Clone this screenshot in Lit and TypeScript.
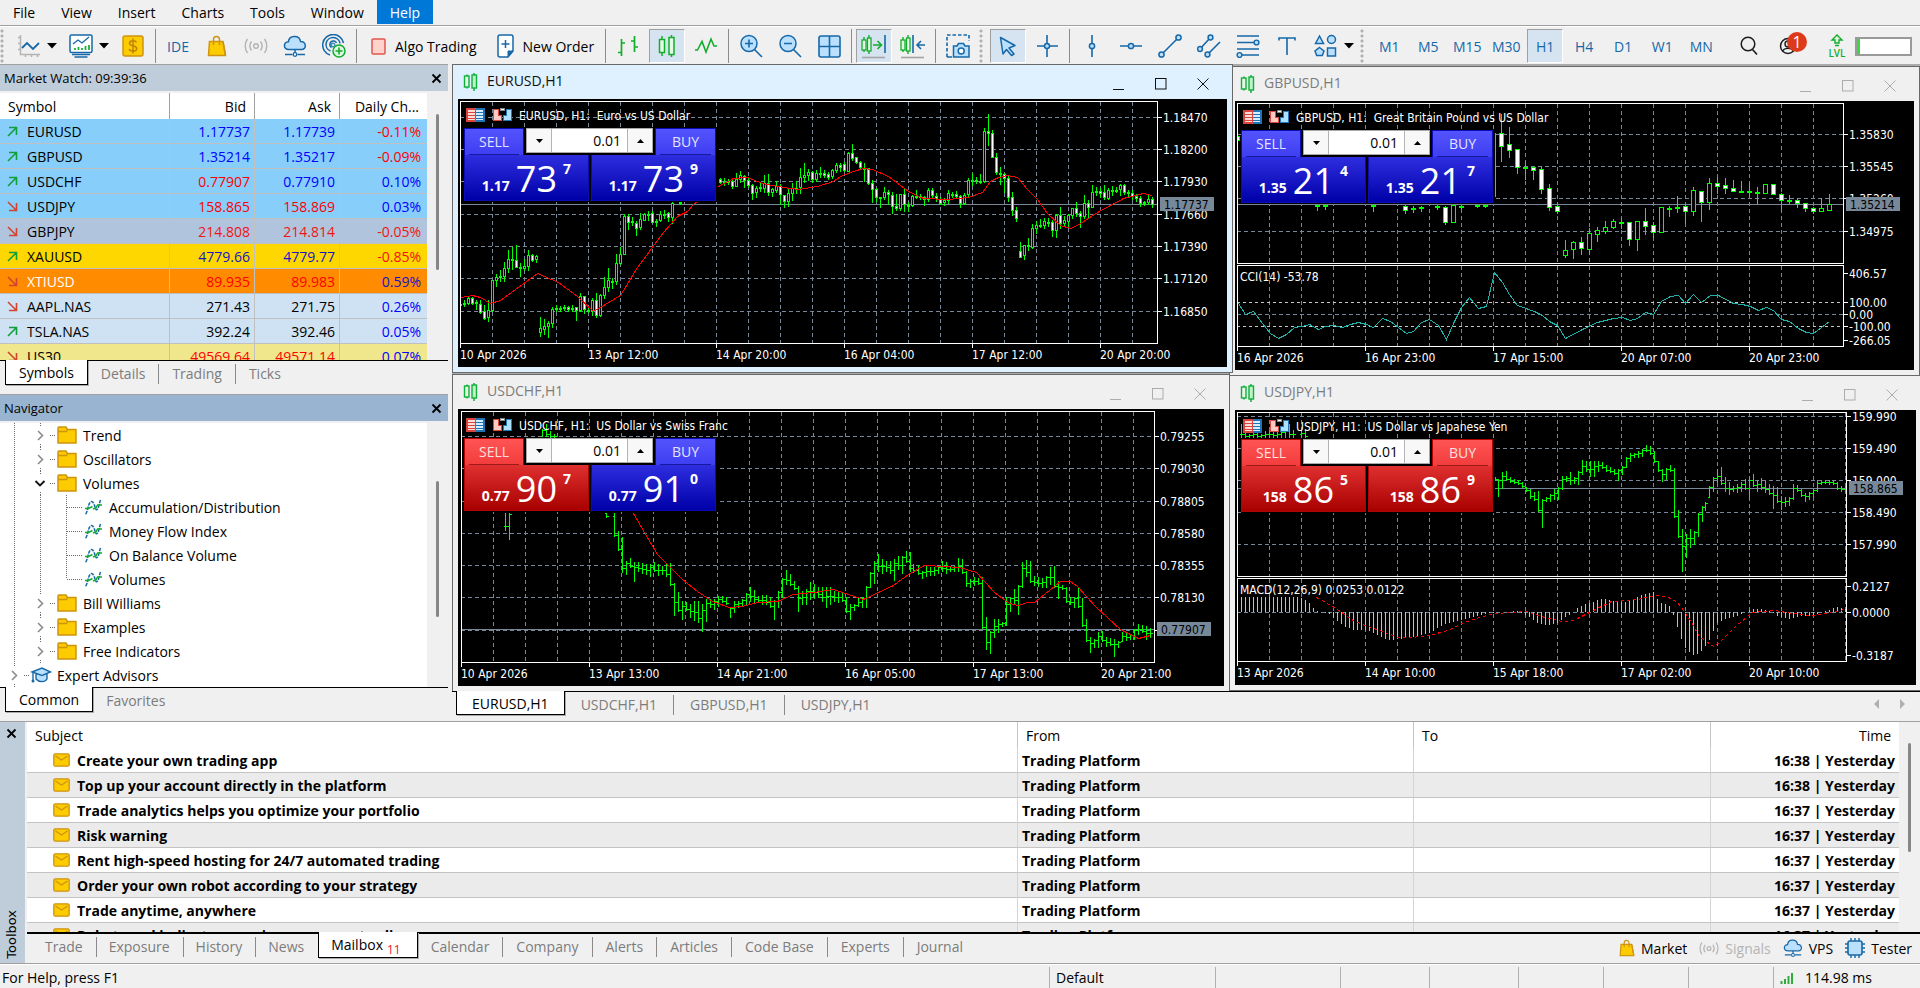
import { LitElement, html, css, svg, nothing } from "lit";
import { customElement, property } from "lit/decorators.js";
import { classMap } from "lit/directives/class-map.js";
import { styleMap } from "lit/directives/style-map.js";

type Pt = [number, number];
interface ScreenScale { x: number; kx: number; y: number; }

/* ---------- chart data ---------- */

const trace = (raw: string, s: ScreenScale): Pt[] =>
  raw.trim().split(/\s+/).map((p) => {
    const [x, y] = p.split(",").map(Number);
    return [Math.round(s.x + x / s.kx), Math.round(s.y + y / 3)] as Pt;
  });

const line = (p: Pt[]) => p.map(([x, y]) => `${x + 0.5},${y + 0.5}`).join(" ");

/* bar index: high, open, close, low */
const EUR_BARS = `0:237,241,240,244 1:236,240,239,242 2:232,239,234,240 3:233,234,239,240 4:236,238,239,245 5:236,240,248,249 6:241,247,254,255 7:236,253,246,257
8:216,246,216,247 9:210,216,213,222 10:206,213,212,217 11:198,212,204,217 12:186,204,195,208 13:183,195,195,205 14:181,196,203,203 15:199,203,204,212
16:195,204,202,206 17:186,202,191,206 18:190,191,196,197 19:191,195,192,198 20:253,268,264,272 21:255,265,262,270 22:257,262,259,273 23:243,259,245,263
24:241,245,244,247 25:242,244,244,247 26:241,244,243,246 27:242,243,245,247 28:241,244,244,247 29:243,243,246,256 30:229,246,232,247 31:232,232,245,249
32:244,246,246,248 33:234,247,236,251 34:229,236,251,253 35:230,251,231,252 36:213,231,223,234 37:204,223,216,227 38:214,217,217,224 39:190,217,199,220
40:183,199,190,200 41:150,190,152,190 42:150,152,158,165 43:153,157,158,161 44:157,159,164,171 45:149,163,155,165 46:149,156,150,156 47:147,150,150,156
48:147,149,158,158 49:155,157,158,162 50:147,156,150,157 51:146,150,150,154 52:148,149,153,157 53:138,153,139,159 55:137,138,139,140
65:114,115,118,119 66:114,117,118,121 67:115,118,117,120 68:114,117,122,124 69:109,122,115,121 70:107,115,111,118 71:111,112,116,123 72:113,116,121,123
73:120,121,129,135 74:122,128,124,133 75:119,124,123,127 76:111,124,119,128 77:110,119,128,131 78:124,128,125,132 79:117,126,122,128 80:120,122,130,140
81:131,131,137,143 82:124,137,129,142 83:119,129,124,136 84:117,124,124,129 85:104,123,113,129 86:99,113,111,118 87:105,111,108,116 88:107,108,115,118
89:106,115,109,117 90:103,109,109,113 91:106,109,111,113 92:108,110,113,115 93:105,112,106,114 94:99,106,101,108 95:99,101,103,107 96:98,100,106,107
97:88,107,89,107 98:80,89,94,96 99:93,93,98,99 100:97,98,103,105 101:99,104,105,117 102:104,104,119,120 103:116,119,125,138 104:124,125,133,137
105:133,133,133,143 106:123,133,128,135 107:126,128,130,140 108:128,131,142,149 109:130,142,144,146 110:130,144,130,146 111:125,130,140,147 112:138,141,141,147
113:131,141,132,142 114:126,132,132,134 115:130,132,133,135 116:132,133,135,141 117:124,135,126,137 118:124,126,131,134 119:129,132,134,137 120:133,135,139,140
121:134,138,136,141 122:126,136,129,139 123:128,130,130,133 124:127,130,132,134 125:131,132,139,143 126:129,139,131,140 127:114,130,116,132 128:109,116,117,121
129:113,117,116,119 130:110,117,117,119 131:64,117,67,118 132:50,67,69,81 133:66,69,93,93 134:89,93,108,110 135:103,109,110,120 136:109,110,114,128
137:112,114,133,137 138:128,133,146,151 139:143,146,154,157 140:178,187,193,193 141:181,191,181,195 142:174,181,182,186 143:160,183,164,184 144:157,164,161,169
145:155,161,161,163 146:154,161,157,164 147:154,158,158,162 148:156,158,166,172 149:150,166,151,173 150:143,151,159,164 151:152,159,156,162 152:150,157,151,163
153:144,151,144,154 154:138,144,149,152 155:147,149,152,163 156:131,152,139,154 157:136,139,143,154 158:121,143,128,143 159:123,128,127,131 160:124,127,129,133
161:121,128,133,135 162:124,134,126,135 163:122,127,126,131 164:123,126,127,128 165:120,125,121,131 166:120,121,128,130 167:126,128,129,132 168:126,129,132,135
169:130,132,134,137 170:132,134,139,142 171:137,138,138,141 172:131,138,135,140 173:133,135,140,143`;

const GBP_BARS = `0:70,72,76,78 10:141,141,142,146 11:141,141,142,145 17:141,141,142,147 21:141,142,146,149 22:142,145,144,148 23:142,143,144,147 25:141,142,142,145
26:142,143,158,160 27:141,158,141,158 28:141,142,142,145 30:141,141,142,143 31:141,141,142,143 32:69,132,69,132 33:50,69,82,97 34:63,80,86,93
35:85,85,103,109 36:97,103,104,115 37:103,103,106,115 38:103,105,125,129 39:120,124,143,146 40:138,142,147,149 41:176,191,186,193 42:177,185,178,194
43:173,178,184,190 44:164,185,169,190 45:163,170,166,177 46:157,167,163,169 47:155,163,157,164 48:154,158,158,164 49:158,158,175,181 50:157,175,157,186
51:144,157,162,170 52:158,161,168,173 53:143,168,143,168 54:142,144,144,152 55:132,144,143,148 56:140,142,147,159 57:123,147,126,151 58:127,127,138,157
59:114,138,119,145 60:113,119,122,129 61:114,121,124,129 62:116,124,127,127 63:117,127,127,128 64:119,127,127,132 65:123,128,129,139 66:120,129,120,129
67:120,120,130,130 68:129,130,136,146 69:131,136,136,139 70:134,136,139,143 71:139,139,144,147 72:143,144,147,149 73:134,147,144,147 74:130,146,140,146`;

/* x, high, low */
const CHF_BARS = `110,417,467 118,417,495 182,165,187 190,150,187 198,170,190 206,180,190 309,417,428 325,417,485 333,470,527 341,490,595 349,560,600 357,552,580
365,565,620 373,565,590 381,568,598 389,570,600 397,570,605 405,563,592 413,570,603 420,575,600 428,570,605 436,568,632 444,628,722 452,655,710 460,680,735
468,685,708 476,690,730 484,682,737 492,680,745 500,690,770 508,675,742 516,675,700 524,675,705 532,665,695 540,665,685 548,668,690 555,700,728 563,680,715
571,680,700 579,675,697 587,658,693 595,640,680 603,648,685 611,665,680 619,662,690 627,662,690 635,668,698 643,678,735 651,650,700 659,612,670 666,588,630
674,600,632 682,622,645 690,637,710 698,650,690 706,645,690 714,625,675 722,630,672 730,638,668 738,640,680 746,638,700 754,640,690 762,652,680 770,655,685
778,655,682 786,668,715 794,690,735 802,690,708 810,670,697 818,668,700 825,635,700 833,595,640 841,560,628 849,540,590 857,555,597 865,560,590 873,562,598
881,555,617 889,545,585 897,545,597 905,530,565 913,535,590 920,570,595 928,572,600 936,590,612 944,575,607 952,580,603 960,580,603 968,575,597 976,560,590
984,565,597 992,575,592 1000,575,592 1008,552,590 1016,555,598 1024,592,635 1032,615,640 1040,610,632 1048,612,630 1056,610,762 1064,730,825 1071,770,837
1079,735,790 1087,735,775 1095,745,755 1103,668,752 1111,670,710 1119,645,690 1127,632,720 1135,565,640 1143,558,605 1151,560,625 1159,605,632 1167,608,635
1175,612,640 1183,605,640 1191,580,630 1199,575,640 1207,620,672 1215,632,645 1223,640,685 1230,670,690 1238,670,700 1246,640,700 1254,672,755 1262,735,800
1270,790,833 1278,795,818 1286,775,818 1294,772,800 1302,790,815 1310,792,812 1318,795,845 1326,800,818 1334,775,800 1342,775,797 1350,780,795 1358,765,795
1366,750,780 1374,752,775 1382,755,795 1389,762,788`;

const JPY_BARS = `37,150,190 46,172,190 55,180,188 64,175,190 73,170,190 82,180,188 91,172,190 100,172,188 109,170,190 118,175,190 127,172,190 136,160,190 145,150,190
154,168,190 172,170,190 181,165,190 609,310,318 616,315,365 625,293,342 634,292,318 643,310,325 652,315,328 661,318,330 670,325,340 679,340,352 688,345,372
697,355,378 706,350,412 715,375,458 724,368,382 733,360,382 742,345,375 751,340,375 760,305,345 769,305,320 778,293,330 787,310,328 796,290,330 805,258,300
814,262,290 823,262,305 832,262,305 841,262,290 850,265,282 859,272,290 868,280,295 877,285,300 886,285,318 895,275,300 904,250,280 913,237,260 922,237,250
931,232,248 940,225,245 949,213,230 958,215,240 967,232,265 976,262,292 985,285,320 994,282,315 1003,273,290 1012,282,430 1021,408,490 1030,465,590
1039,480,550 1048,465,518 1057,470,510 1066,418,485 1075,395,440 1084,385,408 1093,335,370 1102,308,350 1111,285,325 1120,278,330 1129,310,352 1138,325,360
1147,335,350 1156,330,355 1165,325,350 1174,315,345 1183,310,372 1192,300,335 1201,318,350 1210,312,345 1219,320,355 1228,330,360 1237,335,402 1246,340,385
1255,365,405 1264,370,395 1273,370,392 1282,330,375 1291,332,350 1300,345,365 1309,358,380 1318,355,375 1327,345,370 1336,318,350 1345,320,330 1354,318,328
1363,318,330 1372,318,330 1381,325,345 1390,335,352 1399,335,350`;

const candles = (raw: string, x0: number, step: number, y0: number, half: number) =>
  raw.trim().split(/\s+/).map((b) => {
    const [i, rest] = b.split(":");
    const [h, o, c, l] = rest.split(",").map(Number);
    const x = x0 + Number(i) * step;
    const top = y0 + Math.min(o, c);
    const tall = Math.max(1, Math.abs(o - c));
    return svg`<path class="up" d="M${x + 0.5} ${y0 + h}V${y0 + l + 1}"/><rect class=${c > o ? "down" : "hollow"} x=${x - half + 0.5} y=${top + 0.5} width=${half * 2} height=${tall}></rect>`;
  });

const ohlc = (raw: string, s: ScreenScale) => {
  const bars = raw.trim().split(/\s+/).map((b) => {
    const [x, h, l] = b.split(",").map(Number);
    return { x: Math.round(s.x + x / s.kx), h: Math.round(s.y + h / 3), l: Math.round(s.y + l / 3) };
  });
  let prev: number | null = null;
  const d = bars.map((b, i) => {
    const next = bars[i + 1] ?? b;
    const mid = (next.h + next.l) / 2;
    const close = Math.round(Math.min(b.l - 1, Math.max(b.h + 1, mid)));
    const open = Math.min(b.l, Math.max(b.h, prev ?? close));
    prev = close;
    return `M${b.x + 0.5} ${b.h}V${b.l + 1}M${b.x - 1} ${open + 0.5}h1M${b.x + 1} ${close + 0.5}h2`;
  });
  return svg`<path class="up" d=${d.join("")}/>`;
};

interface ChartSpec {
  id: string; title: string; name: string;
  box: { left: number; top: number; width: number; height: number; z: number };
  view: [number, number, number, number];
  frame: [number, number, number, number];
  sub?: [number, number, number, number];
  ys: [number, string][];
  subYs?: [number, string][];
  times: [number, string][];
  price: [number, string];
  bottom: number;
  sell: [string, string, string]; buy: [string, string, string];
  sellRed?: boolean; buyRed?: boolean;
  active?: boolean;
  plot: () => unknown;
}

const macd = () => {
  const s = { x: 1225, kx: 2.256, y: 374 };
  const raw = `28,667 170,667 181,675 190,685 199,698 208,707 217,712 235,718 244,730 253,738 262,747 271,755 290,765 317,766 335,775 350,785 370,796 400,792 430,783 460,773
490,750 520,737 550,730 570,722 590,715 630,710 660,708 685,725 700,742 720,750 745,747 765,728 780,718 795,700 810,687 850,672 900,680 940,660 965,652 980,680 1005,692
1020,755 1030,800 1040,825 1057,843 1075,825 1090,800 1110,745 1130,730 1150,725 1165,718 1185,703 1210,701 1225,706 1245,722 1270,732 1300,722 1320,724 1340,715 1360,705 1380,697 1399,701`;
  const p = trace(raw, s);
  let d = "";
  for (let x = 1237; x < 1846; x += 4) {
    const k = Math.max(1, p.findIndex(([px]) => px >= x));
    const [ax, ay] = p[k - 1], [bx, by] = p[k];
    const y = Math.round(ay + ((by - ay) * (x - ax)) / Math.max(1, bx - ax));
    d += `M${x + 0.5} 611.5V${y + 0.5}`;
  }
  return svg`<path class="hist" d=${d}/>
    <polyline class="ma dash" points=${line(trace(`205,670 245,700 290,740 340,765 390,788 420,790 460,783 500,768 540,745 580,725 610,718 680,712 720,728 760,740 785,738 830,708 870,682
    930,675 970,662 1000,668 1020,685 1045,730 1070,785 1100,815 1115,805 1150,755 1190,715 1240,707 1280,716 1320,724 1360,716 1395,706`, s))}/>
    <text x="1240" y="594">MACD(12,26,9) 0.0253 0.0122</text>`;
};

const CHARTS: ChartSpec[] = [
  {
    id: "gbp", title: "GBPUSD,H1", name: "GBPUSD, H1:\u00a0 Great Britain Pound vs US Dollar",
    box: { left: 777, top: 2, width: 691, height: 310, z: 1 },
    view: [1235, 101, 679, 269], frame: [1237, 103, 606, 160], sub: [1237, 265, 606, 81],
    ys: [[134, "1.35830"], [166, "1.35545"], [198, "1.35260"], [231, "1.34975"]],
    subYs: [[273, "406.57"], [302, "100.00"], [314, "0.00"], [326, "-100.00"], [340, "-266.05"]],
    times: [[1237, "16 Apr 2026"], [1365, "16 Apr 23:00"], [1493, "17 Apr 15:00"], [1621, "20 Apr 07:00"], [1749, "20 Apr 23:00"]],
    price: [204, "1.35214"], bottom: 346, sell: ["1.35", "21", "4"], buy: ["1.35", "21", "7"],
    plot: () => svg`${candles(GBP_BARS, 1237, 8, 64, 2)}
      <path class="level" d="M1237 302.5H1843M1237 326.5H1843"/>
      <polyline class="cci" points=${line(trace(`18,717 35,750 53,740 72,778 90,808 108,821 127,810 145,788 163,787 180,780 200,796 217,787 235,784 254,790 272,781 290,775 308,780 326,788 345,763
      363,772 381,790 399,808 417,801 435,773 453,766 472,783 490,825 508,770 526,728 544,700 563,733 581,726 599,625 617,655 635,690 653,724 690,742 708,752 726,772 744,783 762,821 799,796
      835,775 871,762 890,759 908,769 926,762 944,745 962,750 980,712 999,697 1017,694 1035,717 1053,691 1071,714 1090,694 1108,694 1144,718 1163,721 1181,727 1199,739 1217,728 1235,738
      1253,765 1271,772 1290,793 1308,803 1326,807 1344,788 1362,770`, { x: 1230, kx: 2.2725, y: 64 }))}/>
      <text x="1240" y="281">CCI(14) -53.78</text>`,
  },
  {
    id: "chf", title: "USDCHF,H1", name: "USDCHF, H1:\u00a0 US Dollar vs Swiss Franc",
    box: { left: 0, top: 310, width: 778, height: 318, z: 2 },
    view: [458, 409, 766, 277], frame: [461, 411, 693, 251],
    ys: [[436, "0.79255"], [468, "0.79030"], [501, "0.78805"], [533, "0.78580"], [565, "0.78355"], [597, "0.78130"], [630, ""]],
    times: [[461, "10 Apr 2026"], [589, "13 Apr 13:00"], [717, "14 Apr 21:00"], [845, "16 Apr 05:00"], [973, "17 Apr 13:00"], [1101, "20 Apr 21:00"]],
    price: [629, "0.77907"], bottom: 662, sell: ["0.77", "90", "7"], buy: ["0.77", "91", "0"], sellRed: true,
    plot: () => {
      const s = { x: 450, kx: 1.985, y: 374 };
      return svg`${ohlc(CHF_BARS, s)}<polyline class="ma" points=${line(trace(`363,418 385,475 410,540 430,570 460,615 490,650 520,680 553,699 580,697 610,685 650,680 680,661 720,655 760,645
      790,660 820,674 850,655 880,632 910,600 940,573 980,577 1010,580 1045,595 1080,655 1110,688 1127,694 1145,685 1160,684 1180,660 1210,622 1230,622 1245,635 1280,695 1330,765 1365,793 1390,783`, s))}/>`;
    },
  },
  {
    id: "jpy", title: "USDJPY,H1", name: "USDJPY, H1:\u00a0 US Dollar vs Japanese Yen",
    box: { left: 777, top: 311, width: 693, height: 316, z: 3 },
    view: [1235, 410, 681, 275], frame: [1237, 412, 609, 164], sub: [1237, 578, 609, 83],
    ys: [[416, "159.990"], [448, "159.490"], [480, "159.000"], [512, "158.490"], [544, "157.990"]],
    subYs: [[586, "0.2127"], [612, "0.0000"], [655, "-0.3187"]],
    times: [[1237, "13 Apr 2026"], [1365, "14 Apr 10:00"], [1493, "15 Apr 18:00"], [1621, "17 Apr 02:00"], [1749, "20 Apr 10:00"]],
    price: [488, "158.865"], bottom: 661, sell: ["158", "86", "5"], buy: ["158", "86", "9"], sellRed: true, buyRed: true,
    plot: () => svg`${ohlc(JPY_BARS, { x: 1225, kx: 2.256, y: 374 })}${macd()}`,
  },
  {
    id: "eur", title: "EURUSD,H1", name: "EURUSD, H1:\u00a0 Euro vs US Dollar", active: true,
    box: { left: 0, top: 0, width: 781, height: 309, z: 4 },
    view: [458, 99, 769, 268], frame: [460, 101, 697, 242],
    ys: [[117, "1.18470"], [149, "1.18200"], [181, "1.17930"], [214, "1.17660"], [246, "1.17390"], [278, "1.17120"], [311, "1.16850"]],
    times: [[460, "10 Apr 2026"], [588, "13 Apr 12:00"], [716, "14 Apr 20:00"], [844, "16 Apr 04:00"], [972, "17 Apr 12:00"], [1100, "20 Apr 20:00"]],
    price: [204, "1.17737"], bottom: 343, sell: ["1.17", "73", "7"], buy: ["1.17", "73", "9"],
    plot: () => svg`${candles(EUR_BARS, 460, 4, 64, 1)}
      <polyline class="ma" points=${line([
        ...trace(`33,700 67,693 91,700 120,717 150,707 260,628 325,655 380,697 430,741 510,693 560,610 640,505 680,455 710,440 730,420 770,390 803,365 850,343 890,340 935,357 1000,370 1045,376 1100,365 1150,352`, { x: 450, kx: 3, y: 64 }),
        ...trace(`0,337 40,320 70,313 95,316 145,335 205,380 250,403 320,405 385,398 425,384 450,352 475,340 500,333 530,340 560,375 590,405 620,448 660,483 690,491 710,483 770,445 850,402 910,388 935,393`, { x: 840, kx: 3, y: 64 }),
      ])}/>`,
  },
];

/* ---------- icons ---------- */

const B = "#1668a8", L = "#bbe0fd", G = "#12ad2b", Y = "#fccb00", YD = "#cf9412";
const icon = (w: number, h: number, body: unknown, vb = `0 0 ${w} ${h}`) =>
  html`<svg width=${w} height=${h} viewBox=${vb} fill="none" aria-hidden="true">${body}</svg>`;

const bagArt = svg`<path d="M2.500 6.500h13.500l2.500 14H1.500z" fill=${Y} stroke=${YD} stroke-width="1.500"/><path d="M6.500 10V4.500a3 3 0 0 1 6 0V10M16 7l2.500 13" stroke=${YD} stroke-width="1.500"/>`;
const signalArt = svg`<circle cx="12" cy="9" r="2.300" stroke="#b5b5b5" stroke-width="1.500"/><path d="M7.500 4.500c-2 2.700-2 6.300 0 9M16.500 4.500c2 2.700 2 6.300 0 9M3.500 2c-3 4-3 10 0 14M20.500 2c3 4 3 10 0 14" stroke="#b5b5b5" stroke-width="1.500"/>`;
const cloudArt = svg`<path d="M6 14.500c-6 0-6-7.500-.6-7.700C6 0 16.500-.5 17.500 6.500c6 0 6.500 8 1 8z" fill=${L} stroke=${B} stroke-width="1.500"/><path d="M12 14.500v4M2 19.500h7.500M14.500 19.500H22" stroke=${B} stroke-width="1.500"/><circle cx="12" cy="19.500" r="1.800" fill="#fff" stroke=${B} stroke-width="1.300"/>`;

const I: Record<string, unknown> = {
  line: icon(24, 24, svg`<path d="M3.500 1v19.500H23M1 3.500h2M1 9.500h2M1 15.500h2M8.500 21v2M14.500 21v2M20.500 21v2" stroke="#b4b4b4" stroke-width="1.500"/><path d="M5 14l5-5 6 6 6-6" stroke=${B} stroke-width="1.800"/>`),
  frame: icon(24, 24, svg`<rect x="1" y="1" width="22" height="17.500" rx="1.500" fill="#fff" stroke=${B} stroke-width="1.500"/><path d="M3 20.500h18M5.500 23h13" stroke=${B} stroke-width="1.600"/><path d="M4 10l5-4 4 3 7-6" stroke=${B} stroke-width="1.300"/><path d="M6 16v-2M9.500 16v-3M13 16v-2M16.500 16v-4M20 16v-5" stroke=${G} stroke-width="1.700"/>`),
  dollar: icon(22, 22, svg`<rect x="1" y="1" width="20" height="20" rx="2" fill=${Y} stroke=${YD} stroke-width="1.500"/><path d="M14.500 7.500c-.6-1.300-1.800-1.800-3.500-1.800-2 0-3.500.9-3.500 2.500 0 3.600 7.200 1.700 7.200 5.400 0 1.600-1.600 2.600-3.700 2.600-1.800 0-3.300-.7-3.800-2.200M11 3.500v15" stroke="#c08408" stroke-width="1.500"/>`),
  bag: icon(20, 22, bagArt),
  signal: icon(24, 18, signalArt),
  cloud: icon(24, 22, cloudArt),
  bagSmall: icon(16, 18, bagArt, "0 0 20 22"),
  signalSmall: icon(20, 15, signalArt, "0 0 24 18"),
  cloudSmall: icon(20, 18, cloudArt, "0 0 24 22"),
  radar: icon(24, 24, svg`<path d="M8 21A10.500 10.500 0 1 1 21.500 9M8.500 17A7 7 0 1 1 18 9.500M9.500 13.500A3.500 3.500 0 1 1 14.500 9" stroke=${B} stroke-width="1.500"/><circle cx="11" cy="11" r="2" fill=${L} stroke=${B}/><circle cx="17" cy="17" r="6" fill="#dff7e2" stroke=${G} stroke-width="1.500"/><path d="M17 13.500v7M13.500 17h7" stroke=${G} stroke-width="1.600"/>`),
  stop: icon(15, 17, svg`<rect x="1" y="1" width="13" height="15" rx="1" fill="#ffd2cc" stroke="#e0574c" stroke-width="1.500"/>`),
  order: icon(17, 24, svg`<path d="M3 1h11a2 2 0 0 1 2 2v14l-5 6H3a2 2 0 0 1-2-2V3a2 2 0 0 1 2-2z" fill="#fff" stroke=${B} stroke-width="1.500"/><path d="M16 17l-5 6v-6z" fill=${B} stroke=${B}/><path d="M8.500 6v8M4.500 10h8" stroke=${B} stroke-width="1.500"/>`),
  bars: icon(24, 24, svg`<path d="M5.500 5v17M5.500 9H9M2 18.500h3.500M18.500 2v16M15 7h3.500M18.500 13H22" stroke=${G} stroke-width="1.700"/>`),
  candle: icon(20, 24, svg`<rect x="2.500" y="5.500" width="5" height="13" fill="#e6fae8" stroke=${G} stroke-width="1.500"/><path d="M5 2v3.500M5 18.500V22M14.500 1v2.500M14.500 20.500V23" stroke=${G} stroke-width="1.500"/><rect x="12" y="3.500" width="5" height="17" fill="#e6fae8" stroke=${G} stroke-width="1.500"/>`),
  zig: icon(24, 24, svg`<path d="M1 16h2.500L8 7.500l4 10.500L17 5l3 7h3" stroke=${G} stroke-width="1.600"/>`),
  zin: icon(24, 24, svg`<circle cx="10" cy="9.500" r="8" fill=${L} stroke=${B} stroke-width="1.500"/><path d="M15.500 15.500L23 23M10 5.500v8M6 9.500h8" stroke=${B} stroke-width="1.600"/>`),
  zout: icon(24, 24, svg`<circle cx="10" cy="9.500" r="8" fill=${L} stroke=${B} stroke-width="1.500"/><path d="M15.500 15.500L23 23M6 9.500h8" stroke=${B} stroke-width="1.600"/>`),
  grid: icon(23, 23, svg`<rect x="1" y="1" width="21" height="21" rx="2" fill=${L} stroke=${B} stroke-width="1.600"/><path d="M11.500 1v21M1 11.500h21" stroke=${B} stroke-width="1.600"/>`),
  shift: icon(26, 26, svg`<path d="M3 4v3M3 17v2M8 2v3M8 18v3" stroke=${G} stroke-width="1.400"/><rect x="1" y="7" width="4" height="10" fill="#e6fae8" stroke=${G} stroke-width="1.300"/><rect x="6.500" y="5" width="3.500" height="13" fill="#e6fae8" stroke=${G} stroke-width="1.300"/><path d="M12 12h8M16.500 8l4 4-4 4" stroke=${G} stroke-width="1.600"/><path d="M24 2v18" stroke=${B} stroke-width="1.600"/><path d="M1 24.500h23" stroke="#a5a5a5" stroke-width="1.600"/>`),
  scroll: icon(26, 26, svg`<path d="M3 4v3M3 17v2M8 2v3M8 18v3" stroke=${G} stroke-width="1.400"/><rect x="1" y="7" width="4" height="10" fill="#e6fae8" stroke=${G} stroke-width="1.300"/><rect x="6.500" y="5" width="3.500" height="13" fill="#e6fae8" stroke=${G} stroke-width="1.300"/><path d="M13 2v18M25 12h-8M21 8l-4 4 4 4" stroke=${B} stroke-width="1.600"/><path d="M1 24.500h23" stroke="#a5a5a5" stroke-width="1.600"/>`),
  camera: icon(24, 24, svg`<path d="M1 23V1h22v6" stroke=${B} stroke-width="1.600" stroke-dasharray="3.500 2"/><path d="M7.500 12h3.500l1.500-2.500h5L19 12h4v11H7.500z" fill=${L} stroke=${B} stroke-width="1.500"/><path d="M1 23h5" stroke=${B} stroke-width="1.500"/><circle cx="15.200" cy="17" r="3" fill="#fff" stroke=${B} stroke-width="1.500"/>`),
  cursor: icon(18, 22, svg`<path d="M1.500 2.500l14.500 8-6 2.500 5 6-2.500 1.500-5-6L4 19z" fill=${L} stroke=${B} stroke-width="1.500" stroke-linejoin="round"/>`),
  cross: icon(22, 24, svg`<path d="M11 1v8M11 14v9M1 12h7M14 12h8" stroke=${B} stroke-width="1.600"/><circle cx="11" cy="12" r="2.500" fill=${L} stroke=${B} stroke-width="1.500"/>`),
  vline: icon(8, 24, svg`<path d="M4 1v8M4 15v8" stroke=${B} stroke-width="1.600"/><circle cx="4" cy="12" r="2.600" fill=${L} stroke=${B} stroke-width="1.500"/>`),
  hline: icon(24, 8, svg`<path d="M1 4h8M15 4h8" stroke=${B} stroke-width="1.600"/><circle cx="12" cy="4" r="2.600" fill=${L} stroke=${B} stroke-width="1.500"/>`),
  trend: icon(24, 24, svg`<path d="M4 20L20 4" stroke=${B} stroke-width="1.600"/><circle cx="3.500" cy="20.500" r="2.600" fill=${L} stroke=${B} stroke-width="1.500"/><circle cx="20.500" cy="3.500" r="2.600" fill=${L} stroke=${B} stroke-width="1.500"/>`),
  channel: icon(24, 24, svg`<path d="M3 15L13 4M11 20L23 8" stroke=${B} stroke-width="1.600"/><circle cx="3" cy="15" r="2.400" fill=${L} stroke=${B} stroke-width="1.500"/><circle cx="13.500" cy="3.500" r="2.400" fill=${L} stroke=${B} stroke-width="1.500"/><circle cx="10.500" cy="20.500" r="2.400" fill=${L} stroke=${B} stroke-width="1.500"/>`),
  fibo: icon(24, 24, svg`<path d="M1 2h22M1 8.500h17M1 15h22M6 21h17" stroke=${B} stroke-width="1.700"/><circle cx="20.500" cy="8.500" r="2.400" fill=${L} stroke=${B} stroke-width="1.400"/><circle cx="3.500" cy="21" r="2.400" fill=${L} stroke=${B} stroke-width="1.400"/>`),
  text: icon(18, 20, svg`<path d="M1 4.500V2h16v2.500M9 2v17" stroke=${B} stroke-width="1.600"/>`),
  shapes: icon(23, 24, svg`<path d="M1.500 9.500L5.500 2l4 7.500zM5.500 13.500l4.500 3.500-1.700 4.500H2.700L1 17z" fill=${L} stroke=${B} stroke-width="1.500"/><circle cx="17.500" cy="5.500" r="4" fill=${L} stroke=${B} stroke-width="1.500"/><rect x="13.500" y="14" width="8" height="8" fill=${L} stroke=${B} stroke-width="1.500"/>`),
  search: icon(18, 20, svg`<circle cx="8" cy="8" r="6.800" stroke="#1c1c1c" stroke-width="1.500"/><path d="M12.500 13.500l4.500 5" stroke="#1c1c1c" stroke-width="1.700"/>`),
  user: icon(18, 18, svg`<circle cx="9" cy="9" r="7.500" stroke="#1c1c1c" stroke-width="1.500"/><circle cx="9" cy="7" r="3" stroke="#1c1c1c" stroke-width="1.400"/><path d="M3.500 14c2-3.500 9-3.500 11 0" stroke="#1c1c1c" stroke-width="1.400"/>`),
  level: icon(14, 13, svg`<path d="M7 1l5 5H9v3H5V6H2zM5 11.500h4" stroke=${G} stroke-width="1.400" fill="#dff7e2"/>`),
  caret: icon(10, 6, svg`<path d="M0 0h10L5 5.500z" fill="#000"/>`),
  x: icon(11, 11, svg`<path d="M1.500 1.500l8 8M9.500 1.500l-8 8" stroke="#000" stroke-width="1.800"/>`),
  up: icon(11, 11, svg`<path d="M1 10l8-8M2 1.500h7.500V9" stroke="#0fa03a" stroke-width="1.600"/>`),
  down: icon(11, 11, svg`<path d="M1 1l8 8M9.500 2v7.500H2" stroke="#d2432f" stroke-width="1.600"/>`),
  folder: icon(20, 18, svg`<path d="M1 2a1 1 0 0 1 1-1h7l1.500 2.500H19V17H1z" fill=${Y} stroke=${YD} stroke-width="1.500"/><path d="M1 5.500h8.500l1-2" stroke=${YD} stroke-width="1.300"/>`),
  indicator: icon(18, 16, svg`<path d="M1.500 15c2-1 2.500-9 4.500-11.500S10 4 11 8s2.500 3.500 3.500 0S16 2.500 16.500 1" stroke=${B} stroke-width="1.500" stroke-dasharray="3.500 1"/><path d="M1 9.500h3.500l4-2M9 10l3-1 1.500-3H18" stroke=${G} stroke-width="1.500"/>`),
  expert: icon(20, 16, svg`<path d="M5 7v5c3 3.500 9 3.500 11 0V7M1 5l10-4 8.500 4L11 8.500z" fill=${L} stroke=${B} stroke-width="1.400"/><path d="M2 5.500V14" stroke=${B} stroke-width="1.400"/><circle cx="2" cy="14" r="1.500" fill=${B}/>`),
  mail: icon(17, 14, svg`<rect x=".8" y=".8" width="15.400" height="12.400" rx="1.500" fill=${Y} stroke=${YD} stroke-width="1.300"/><path d="M2.500 3l6 4 6-4" stroke=${YD} stroke-width="1.300"/>`),
  chip: icon(20, 20, svg`<rect x="3" y="3" width="14" height="14" rx="2" fill=${L} stroke=${B} stroke-width="1.600"/><path d="M6 0v3M10 0v3M14 0v3M6 17v3M10 17v3M14 17v3M0 6h3M0 10h3M0 14h3M17 6h3M17 10h3M17 14h3" stroke=${B} stroke-width="1.400"/>`),
  net: icon(16, 12, svg`<path d="M1.500 12V9M5 12V7M8.500 12V4M12 12V1" stroke="#2fae3e" stroke-width="2"/>`),
  winmin: icon(12, 13, svg`<path d="M0 12.500h11" stroke="currentColor" stroke-width="1"/>`),
  winmax: icon(12, 12, svg`<rect x=".5" y=".5" width="10.500" height="10.500" stroke="currentColor"/>`),
  winclose: icon(12, 12, svg`<path d="M.5.500l11 11M11.500.500l-11 11" stroke="currentColor"/>`),
  wincandle: icon(16, 18, svg`<path d="M4 1.500V3M4 13v2.500M11 0v2M11 15v3" stroke="#10b03a" stroke-width="1.500"/><rect x="1.500" y="3" width="4.500" height="11" fill="#e2f7e6" stroke="#10b03a" stroke-width="1.400"/><rect x="9" y="2" width="4.500" height="13" fill="#bdf3c8" stroke="#10b03a" stroke-width="1.400"/>`),
};

/* ---------- elements ---------- */

@customElement("quote-panel")
export class QuotePanel extends LitElement {
  @property({ attribute: false }) spec!: ChartSpec;
  static styles = css`
    :host { display: block; box-sizing: border-box; width: 254px; background: #000; padding: 0 2px 1px 0; font-family: "Open Sans", "Noto Sans", sans-serif; }
    .wrap { display: grid; grid-template-columns: 60px minmax(0, 1fr) 61px; grid-template-rows: 27px; }
    button { border: 0; padding: 0; margin: 0; font: inherit; color: #fff; background: none; }
    .side { font-size: 14px; color: #e4e4ff; background: linear-gradient(#5454fd, #3e3ef2); border: 1px solid #0c0cb4; border-bottom: 0; box-sizing: border-box; height: 27px; }
    .side.red { color: #ffe0e0; background: linear-gradient(#ff5454, #f23c3c); border-color: #b00404; }
    .side span { display: block; margin: 0 4px; height: 24px; line-height: 24px; border-bottom: 1px solid rgba(0, 0, 100, 0.6); }
    .side.red span { border-bottom-color: rgba(100, 0, 0, 0.6); }
    .spin { display: grid; grid-template-columns: 24px minmax(0, 1fr) 24px; margin: 0 2px 2px; background: #fff; border: 1px solid #a8a8a8; }
    .spin button { background: #f8f8f8; color: #000; display: grid; place-items: center; }
    .spin input { min-width: 0; width: 100%; border: 0; border-left: 1px solid #b4b4b4; border-right: 1px solid #b4b4b4; box-sizing: border-box; text-align: right; padding: 0 6px 0 0; font: 14px "Open Sans", sans-serif; outline: 0; border-radius: 0; color: #000; }
    .prices { display: grid; grid-template-columns: 1fr 1fr; gap: 2px; }
    .price { height: 46px; background: linear-gradient(#2e2ee0, #0000a8); border: 1px solid #0c0cb4; border-top: 0; display: flex; justify-content: flex-end; align-items: flex-end; gap: 6px; padding: 0 17px 7px 0; box-sizing: border-box; }
    .price.red { background: linear-gradient(#e03030, #a80000); border-color: #b00404; }
    .price b { font-size: 14px; line-height: 14px; }
    .price strong { font-size: 36px; line-height: 28px; font-weight: 400; }
    .price b:last-child { align-self: flex-start; padding-top: 7px; }
  `;
  render() {
    const s = this.spec;
    const price = (p: string[], red?: boolean, label?: string) =>
      html`<button class=${classMap({ price: true, red: !!red })} aria-label=${label + " " + p.join("")}><b>${p[0]}</b><strong>${p[1]}</strong><b>${p[2]}</b></button>`;
    return html`<div class="wrap">
        <button class=${classMap({ side: true, red: !!s.sellRed })}><span>SELL</span></button>
        <div class="spin">
          <button aria-label="Decrease volume">${icon(7, 4, svg`<path d="M0 0h7L3.500 4z" fill="#000"/>`)}</button>
          <input type="text" aria-label="Volume" .value=${"0.01"} />
          <button aria-label="Increase volume">${icon(7, 4, svg`<path d="M0 4h7L3.500 0z" fill="#000"/>`)}</button>
        </div>
        <button class=${classMap({ side: true, red: !!s.buyRed })}><span>BUY</span></button>
      </div>
      <div class="prices">${price(s.sell, s.sellRed, "Sell")}${price(s.buy, s.buyRed, "Buy")}</div>`;
  }
}

@customElement("chart-window")
export class ChartWindow extends LitElement {
  @property({ attribute: false }) spec!: ChartSpec;
  static styles = css`
    :host { display: block; height: 100%; }
    .win { height: 100%; box-sizing: border-box; border: 1px solid #696969; background: #f0f0f0; padding: 0 5px 5px; display: flex; flex-direction: column; color: #7c7c7c; }
    .win.active { background: #dff0ff; color: #111; }
    header { flex: 0 0 34px; display: flex; align-items: center; padding: 0 11px 0 5px; gap: 8px; font: 14px "Open Sans", "Noto Sans", sans-serif; }
    header h2 { font: inherit; margin: 0 auto 0 0; line-height: 18px; padding-bottom: 2px; }
    header button { width: 42px; height: 30px; padding: 0; border: 0; background: none; display: grid; place-items: center; color: #acacac; margin: 3px -8px 0 0; }
    .active header button { color: #111; }
    .chart { flex: 1; position: relative; background: #000; overflow: hidden; }
    .chart > svg { display: block; }
    quote-panel { position: absolute; left: 6px; top: 29px; }
    text { font: 12px "DejaVu Sans Condensed", "DejaVu Sans", sans-serif; fill: #fff; }
    text.box { fill: #000; }
    .chart path, .chart polyline, .chart rect { shape-rendering: crispEdges; }
    .hollow { fill: #000; }
    .hollow, .down, .up { stroke: #0f0; }
    .down { fill: #fff; }
    .grid { stroke: #778899; stroke-dasharray: 4 3; }
    .level { stroke: #c8c8c8; stroke-dasharray: 3 3; }
    .frame { stroke: #fff; }
    .now { stroke: #778899; }
    .tag { fill: #778899; }
    .ma { stroke: #f00; }
    .dash { stroke-dasharray: 3 3; }
    .cci { stroke: #20b2aa; }
    .hist { stroke: #c0c0c0; }
  `;
  render() {
    const s = this.spec;
    const [vx, vy, vw, vh] = s.view;
    const [fx, fy, fw] = s.frame;
    const panes = [s.frame, ...(s.sub ? [s.sub] : [])];
    const right = fx + fw;
    let grid = "";
    for (const [, py, , ph] of panes) for (let x = fx + 32; x < right; x += 32) grid += `M${x + 0.5} ${py + 1}V${py + ph}`;
    for (const [y] of s.ys) grid += `M${fx} ${y + 0.5}H${right}`;
    if (s.sub) grid += `M${fx} ${(s.id === "gbp" ? 314 : 612) + 0.5}H${right}`;
    const tx = vx + 61;
    return html`<section class=${classMap({ win: true, active: !!s.active })} aria-label=${s.title}>
      <header>${I.wincandle}<h2>${s.title}</h2>
        <button aria-label="Minimize">${I.winmin}</button><button aria-label="Maximize">${I.winmax}</button><button aria-label="Close">${I.winclose}</button>
      </header>
      <div class="chart">
        <svg width=${vw} height=${vh} viewBox="${vx} ${vy} ${vw} ${vh}" fill="none" role="img" aria-label=${s.name}>
          <defs><clipPath id="pane"><rect x=${fx} y=${fy} width=${fw} height=${s.bottom - fy}></rect></clipPath></defs>
          <path class="grid" d=${grid}/>
          <path class="now" d="M${fx} ${s.price[0] + 0.5}H${right}"/>
          <g clip-path="url(#pane)">${s.plot()}</g>
          ${panes.map(([x, y, w, h]) => svg`<rect class="frame" x=${x + 0.5} y=${y + 0.5} width=${w} height=${h}></rect>`)}
          ${[...s.ys, ...(s.subYs ?? [])].map(([y, t]) => svg`<path class="frame" d="M${right} ${y + 0.5}h5"/><text x=${right + 6} y=${y + 5}>${t}</text>`)}
          ${s.times.map(([x, t]) => svg`<path class="frame" d="M${x + 0.5} ${s.bottom}v5"/><text x=${x} y=${s.bottom + 16}>${t}</text>`)}
          <rect class="tag" x=${right + 3} y=${s.price[0] - 7} width="54" height="14"></rect>
          <text class="box" x=${right + 7} y=${s.price[0] + 5}>${s.price[1]}</text>
          <g transform="translate(${vx + 8} ${vy + 9})">
            <rect x="0" y="0" width="10" height="14" fill="#d9443c"></rect><rect x="10" y="0" width="9" height="14" fill="#1f74b8"></rect>
            <path d="M2 2h7v2H2zM2 5h7v2H2zM2 8h7v2H2zM2 11h7v1H2z" fill="#ffdcd8"/><path d="M10 2h7v2h-7zM10 5h7v2h-7zM10 8h7v2h-7zM10 11h7v1h-7z" fill="#d4edff"/>
            <path d="M27.500 1.500h5v6h3v5h-8z" fill="#ffc9c4" stroke="#d8483f"/><path d="M45.500 1.500h-5v6h-3v5h8z" fill="#aee0ff" stroke="#2478b8"/>
            <path d="M34.500.500h4v2h-4z" fill="#fff" stroke="#888"/>
          </g>
          <text x=${tx} y=${vy + 21}>${s.name}</text>
        </svg>
        <quote-panel .spec=${s}></quote-panel>
      </div>
    </section>`;
  }
}

const QUOTES = [
  ["u", "EURUSD", "1.17737", "1.17739", "-0.11%", "sky", "b", "b", "r"],
  ["u", "GBPUSD", "1.35214", "1.35217", "-0.09%", "sky", "b", "b", "r"],
  ["u", "USDCHF", "0.77907", "0.77910", "0.10%", "sky", "r", "b", "b"],
  ["d", "USDJPY", "158.865", "158.869", "0.03%", "sky", "r", "r", "b"],
  ["d", "GBPJPY", "214.808", "214.814", "-0.05%", "steel", "r", "r", "r"],
  ["u", "XAUUSD", "4779.66", "4779.77", "-0.85%", "gold", "b", "b", "r"],
  ["d", "XTIUSD", "89.935", "89.983", "0.59%", "orange", "r", "r", "b"],
  ["d", "AAPL.NAS", "271.43", "271.75", "0.26%", "pale", "k", "k", "b"],
  ["u", "TSLA.NAS", "392.24", "392.46", "0.05%", "pale", "k", "k", "b"],
  ["d", "US30", "49569.64", "49571.14", "0.07%", "khaki", "r", "r", "b"],
];
const TREE: [string, string][] = [
  ["f", "Trend"], ["f", "Oscillators"], ["o", "Volumes"], ["i", "Accumulation/Distribution"], ["i", "Money Flow Index"],
  ["i", "On Balance Volume"], ["l", "Volumes"], ["f", "Bill Williams"], ["f", "Examples"], ["f", "Free Indicators"], ["e", "Expert Advisors"],
];
const MAIL: [string, string][] = [
  ["Create your own trading app", "16:38"], ["Top up your account directly in the platform", "16:38"],
  ["Trade analytics helps you optimize your portfolio", "16:37"], ["Risk warning", "16:37"],
  ["Rent high-speed hosting for 24/7 automated trading", "16:37"], ["Order your own robot according to your strategy", "16:37"],
  ["Trade anytime, anywhere", "16:37"], ["Robots and indicators can improve your trading", "16:37"],
];
const BOX_TABS = ["Trade", "Exposure", "History", "News", "Mailbox", "Calendar", "Company", "Alerts", "Articles", "Code Base", "Experts", "Journal"];

@customElement("app-root")
export class AppRoot extends LitElement {
  static styles = css`
    :host { display: flex; flex-direction: column; height: 100vh; background: #f0f0f0; color: #000; font: 14px "Open Sans", "Noto Sans", sans-serif; overflow: hidden; }
    * { box-sizing: border-box; }
    button { font: inherit; color: inherit; background: none; border: 0; padding: 0; margin: 0; white-space: nowrap; }
    svg { display: block; flex: none; }
    .menu { display: flex; height: 26px; flex: none; border-bottom: 1px solid #a0a0a0; }
    .menu button { padding: 0 13px; height: 24px; }
    .menu .hot { background: #0078d7; color: #fff; }
    .tools { flex: none; height: 38px; border-top: 1px solid #fff; display: flex; gap: 3px; padding: 1px 8px 0 0; align-items: center; }
    .grip { width: 4px; height: 34px; background: radial-gradient(circle at 2px 2px, #b0b0b0 1px, transparent 2px) 0 0 / 4px 5px; margin-right: 4px; flex: none; }
    .tb { width: 36px; height: 34px; flex: none; display: flex; align-items: center; justify-content: center; border: 1px solid transparent; color: #1668a8; position: relative; }
    .tb.on { background: #d6e4f2; border-color: #a0a0a0 #fff #fff #a0a0a0; }
    .tb.drop { width: 49px; justify-content: space-between; padding: 0 2px 0 5px; }
    .tb.wide { width: auto; color: #000; gap: 9px; padding: 0 6px 0 9px; }
    .sep { width: 1px; height: 34px; background: #8c8c8c; margin: 0 1px; flex: none; }
    .spring { flex: 1; }
    .badge { position: absolute; right: -2px; top: 2px; width: 20px; height: 20px; border-radius: 50%; background: #dd3a1c; color: #fff; text-align: center; line-height: 20px; font-size: 16px; }
    .tb.lvl { width: 30px; flex-direction: column; color: #12ad2b; font-size: 10px; line-height: 10px; gap: 1px; font-weight: 600; }
    .gapper { width: 10px; }
    .meter { width: 57px; height: 19px; border: 2px solid #9a9a9a; background: linear-gradient(90deg, #3fd63f 3px, #fff 3px); }
    .main { flex: 1; min-height: 0; display: grid; grid-template-columns: 448px minmax(0, 1fr); column-gap: 4px; }
    .left { display: flex; flex-direction: column; min-height: 0; }
    .dock { border-top: 1px solid #a0a0a0; height: 27px; flex: none; background: #bfcddb; display: flex; align-items: center; justify-content: space-between; padding: 0 6px 0 4px; }
    .dock h2 { font: inherit; font-size: 13px; margin: 0; }
    .dock.nav { background: #99b4d1; }
    .body { display: flex; margin-top: 2px; background: #fff; border-bottom: 1px solid #000; overflow: hidden; }
    .body.quotes { height: 268px; flex: none; }
    .body.tree { flex: 1; min-height: 0; }
    .track { width: 21px; background: #f0f0f0; flex: none; margin-left: auto; display: flex; justify-content: center; }
    .thumb { width: 3px; border-radius: 2px; background: #868686; }
    .quotes .thumb { height: 156px; margin-top: 21px; }
    .tree .thumb { height: 136px; margin-top: 58px; }
    table { border-spacing: 0; table-layout: fixed; width: 100%; align-self: flex-start; }
    th { font-weight: 400; text-align: left; }
    td, th { padding: 0; white-space: nowrap; overflow: hidden; }
    .qt th { height: 26px; border-right: 1px solid #a0a0a0; padding: 0 8px; }
    .qt th:not(:first-child), .qt td:not(:first-child) { text-align: right; }
    .qt td { height: 25px; border-right: 1px solid #c0c0c0; border-bottom: 1px solid #c0c0c0; padding: 0 4px; }
    .qt th:last-child, .qt td:last-child { border-right: 0; }
    .qt td:last-child { padding-right: 6px; }
    .qt .c0 { width: 170px; } .qt .c1 { width: 85px; }
    .sym { display: flex; align-items: center; gap: 9px; padding-left: 3px; }
    .sky td { background: #87cefa; } .steel td { background: #b0c4de; } .gold td { background: #ffd700; }
    .orange td { background: #ff8c00; color: #fff; } .pale td { background: #cfe2f3; } .khaki td { background: #f0e68c; }
    td.b { color: #00f; } td.r { color: #f00; } td.k { color: #000; }
    .gold td.b, .orange td.b { color: #1414c8; }
    .steel td.r, .gold td.r { color: #f01414; }
    .tabs { display: flex; height: 33px; flex: none; padding-left: 5px; align-items: flex-start; color: #7c7c7c; }
    .tabs button { padding: 0 13px; height: 20px; margin-top: 3px; border-right: 1px solid #8a8a8a; line-height: 18px; }
    .tabs .on { background: #fff; color: #000; height: 25px; line-height: 26px; margin-top: -1px; padding: 0 13px; border: 1px solid #000; border-top: 0; box-shadow: 1px 1px #aaa; position: relative; }
    .tabs button.last { border-right-color: transparent; }
    ul { list-style: none; margin: 0; padding: 0 0 0 1px; flex: 1; }
    li { display: flex; align-items: center; height: 24px; }
    li svg { overflow: visible; }
    li .g { width: 26px; height: 24px; }
    li .ic { margin: 0 6px 0 4px; }
    li .ic.small { margin: 0 7px 0 5px; }
    .mdi { display: flex; flex-direction: column; min-width: 0; }
    .desk { flex: 1; position: relative; background: #ababab; overflow: hidden; border-bottom: 1px solid #000; }
    .slot { position: absolute; }
    .mdi .tabs { height: 29px; padding-left: 4px; }
    .mdi .tabs button { padding: 0 16px; }
    .mdi .tabs .on { padding: 0 15px; height: 24px; }
    .nudge { margin: 7px 14px 0 auto; display: flex; gap: 17px; }
    .box { flex: none; height: 243px; display: grid; grid-template-columns: 25px minmax(0, 1fr); column-gap: 2px; border-top: 1px solid #a0a0a0; border-bottom: 1px solid #a0a0a0; }
    .strip { background: #bfcddb; display: flex; flex-direction: column; justify-content: space-between; align-items: center; padding: 6px 2px 4px 0; font: 13px "DejaVu Sans", sans-serif; }
    .strip span { writing-mode: vertical-rl; transform: rotate(180deg); line-height: 18px; }
    .right { display: flex; flex-direction: column; min-height: 0; }
    .mail { flex: 1; min-height: 0; display: flex; background: #fff; overflow: hidden; border-bottom: 2px solid #000; }
    .mail .thumb { height: 109px; margin-top: 21px; }
    .mt th { height: 26px; border-right: 1px solid #c4c4c4; padding: 0 8px; }
    .mt td { height: 25px; font-weight: 700; border-right: 1px solid #d4d4d4; border-bottom: 1px solid #c4c4c4; padding: 0 4px; }
    .mt th:last-child, .mt td:last-child { text-align: right; border-right: 0; }
    .mt tr:nth-child(even) td { background: #ebebeb; }
    .mt .subj { display: flex; align-items: center; gap: 7px; padding-left: 22px; }
    .mt .m1 { width: 396px; } .mt .m2 { width: 297px; } .mt .m3 { width: 188px; }
    .mail + .tabs { height: 29px; padding-left: 6px; }
    .mail + .tabs .on { margin-top: -2px; height: 26px; padding: 0 16px 0 12px; }
    .mail + .tabs .before { padding: 0 13px 0 12px; }
    .mail + .tabs .next { border-right-color: transparent; }
    .cnt { color: #f01030; font-size: 12px; padding-left: 4px; position: relative; top: 4px; }
    .links { margin-left: auto; display: flex; gap: 12px; color: #000; padding: 3px 8px 0 0; }
    .links a { display: flex; align-items: center; gap: 6px; color: inherit; text-decoration: none; height: 22px; }
    .links a.off { color: #b4b4b4; }
    .status { flex: none; height: 24px; border-top: 1px solid #fff; display: flex; padding-top: 2px; }
    .status span { border-left: 1px solid #b0b0b0; padding: 1px 0 0 6px; line-height: 20px; display: flex; align-items: center; gap: 9px; }
    .status .s0 { flex: 1; border: 0; padding-left: 2px; }
    .s1 { width: 166px; } .s2 { width: 125px; } .s3 { width: 89px; } .s4 { width: 85px; } .s5 { width: 147px; }
  `;

  private tb(name: string, label: string, on = false) {
    return html`<button class=${classMap({ tb: true, on })} aria-label=${label}>${I[name]}</button>`;
  }
  private drop(name: string, label: string) {
    return html`<button class="tb drop" aria-label=${label}>${I[name]}${I.caret}</button>`;
  }
  private treeRow([kind, label]: [string, string]) {
    const v = (d: string) => svg`<path d=${d} stroke="#6c6c6c" stroke-dasharray="1 1" shape-rendering="crispEdges"/>`;
    const cell = (body: unknown) => html`<svg class="g" width="26" height="24" fill="none">${body}</svg>`;
    const chev = svg`${v("M13.500 0V3M13.500 21V24M23 12.500h6")}<path d="M11 8l4.500 4.500L11 17" stroke="#8c8c8c" stroke-width="1.600"/>`;
    const bar = cell(v("M13.500 0V24"));
    if (kind === "e") return html`<li>${cell(chev)}<span class="ic">${I.expert}</span>${label}</li>`;
    if (kind === "f") return html`<li>${bar}${cell(chev)}<span class="ic">${I.folder}</span>${label}</li>`;
    if (kind === "o")
      return html`<li>${bar}${cell(svg`${v("M13.500 0V3M13.500 21V24M23 12.500h6")}<path d="M8.500 10l4.500 4.500 4.500-4.500" stroke="#111" stroke-width="1.800"/>`)}<span class="ic">${I.folder}</span>${label}</li>`;
    return html`<li>${bar}${bar}${cell(v(kind === "l" ? "M13.500 0V12M13.500 12.500h15" : "M13.500 0V24M13.500 12.500h15"))}<span class="ic small">${I.indicator}</span>${label}</li>`;
  }

  render() {
    return html`
      <nav class="menu">${["File", "View", "Insert", "Charts", "Tools", "Window", "Help"].map((m) => html`<button class=${m === "Help" ? "hot" : ""}>${m}</button>`)}</nav>
      <div class="tools" role="toolbar">
        <span class="grip"></span>
        ${this.drop("line", "New chart")}${this.drop("frame", "Profiles")}${this.tb("dollar", "Market Watch")}
        <i class="sep"></i>
        <button class="tb">IDE</button>${this.tb("bag", "Market")}${this.tb("signal", "Signals")}${this.tb("cloud", "VPS")}${this.tb("radar", "Community")}
        <i class="sep"></i>
        <button class="tb wide">${I.stop}Algo Trading</button><button class="tb wide">${I.order}New Order</button>
        <i class="sep"></i>
        ${this.tb("bars", "Bar chart")}${this.tb("candle", "Candlesticks", true)}${this.tb("zig", "Line chart")}
        <i class="sep"></i>
        ${this.tb("zin", "Zoom in")}${this.tb("zout", "Zoom out")}${this.tb("grid", "Tile windows")}
        <i class="sep"></i>
        ${this.tb("shift", "Auto scroll", true)}${this.tb("scroll", "Chart shift")}
        <i class="sep"></i>
        ${this.tb("camera", "Save picture")}
        <span class="grip"></span>
        ${this.tb("cursor", "Cursor", true)}${this.tb("cross", "Crosshair")}
        <i class="sep"></i>
        ${this.tb("vline", "Vertical line")}${this.tb("hline", "Horizontal line")}${this.tb("trend", "Trendline")}${this.tb("channel", "Channel")}${this.tb("fibo", "Fibonacci")}${this.tb("text", "Text")}${this.drop("shapes", "Objects")}
        <span class="grip"></span>
        ${["M1", "M5", "M15", "M30", "H1", "H4", "D1", "W1", "MN"].map((t) => html`<button class=${classMap({ tb: true, on: t === "H1" })}>${t}</button>`)}
        <span class="spring"></span>
        ${this.tb("search", "Search")}
        <button class="tb" aria-label="Account">${I.user}<span class="badge">1</span></button>
        <span class="gapper"></span>
        <button class="tb lvl">${I.level}LVL</button>
        <div class="meter"></div>
      </div>
      <div class="main">
        <div class="left">
          <header class="dock"><h2>Market Watch: 09:39:36</h2><button aria-label="Close Market Watch">${I.x}</button></header>
          <div class="body quotes">
            <table class="qt">
              <colgroup><col class="c0" /><col class="c1" /><col class="c1" /><col /></colgroup>
              <thead><tr><th>Symbol</th><th>Bid</th><th>Ask</th><th>Daily Ch...</th></tr></thead>
              <tbody>${QUOTES.map((q) => html`<tr class=${q[5]}><td><div class="sym">${q[0] === "u" ? I.up : I.down}${q[1]}</div></td><td class=${q[6]}>${q[2]}</td><td class=${q[7]}>${q[3]}</td><td class=${q[8]}>${q[4]}</td></tr>`)}</tbody>
            </table>
            <div class="track"><div class="thumb"></div></div>
          </div>
          <div class="tabs"><button class="on">Symbols</button><button>Details</button><button>Trading</button><button class="last">Ticks</button></div>
          <header class="dock nav"><h2>Navigator</h2><button aria-label="Close Navigator">${I.x}</button></header>
          <div class="body tree">
            <ul>${TREE.map((t) => this.treeRow(t))}</ul>
            <div class="track"><div class="thumb"></div></div>
          </div>
          <div class="tabs"><button class="on">Common</button><button class="last">Favorites</button></div>
        </div>
        <div class="mdi">
          <div class="desk">
            ${CHARTS.map((c) => html`<div class="slot" style=${styleMap({ left: c.box.left + "px", top: c.box.top + "px", width: c.box.width + "px", height: c.box.height + "px", zIndex: String(c.box.z) })}><chart-window .spec=${c}></chart-window></div>`)}
          </div>
          <div class="tabs"><button class="on">EURUSD,H1</button><button>USDCHF,H1</button><button>GBPUSD,H1</button><button class="last">USDJPY,H1</button>
            <div class="nudge">${icon(8, 10, svg`<path d="M6 0v10L1 5z" fill="#b0b0b0"/>`)}${icon(8, 10, svg`<path d="M2 0v10l5-5z" fill="#b0b0b0"/>`)}</div>
          </div>
        </div>
      </div>
      <div class="box">
        <div class="strip"><button aria-label="Close Toolbox">${I.x}</button><span>Toolbox</span></div>
        <div class="right">
          <div class="mail">
            <table class="mt">
              <colgroup><col /><col class="m1" /><col class="m2" /><col class="m3" /></colgroup>
              <thead><tr><th>Subject</th><th>From</th><th>To</th><th>Time</th></tr></thead>
              <tbody>${MAIL.map(([s, t]) => html`<tr><td><div class="subj">${I.mail}${s}</div></td><td>Trading Platform</td><td></td><td>${t} | Yesterday</td></tr>`)}</tbody>
            </table>
            <div class="track"><div class="thumb"></div></div>
          </div>
          <div class="tabs">
            ${BOX_TABS.map((t, i) => html`<button class=${classMap({ on: i === 4, last: i === 11, before: i < 4, next: i === 3 })}>${t}${i === 4 ? html`<span class="cnt">11</span>` : nothing}</button>`)}
            <div class="links"><a href="#market">${I.bagSmall}Market</a><a href="#signals" class="off">${I.signalSmall}Signals</a><a href="#vps">${I.cloudSmall}VPS</a><a href="#tester">${I.chip}Tester</a></div>
          </div>
        </div>
      </div>
      <footer class="status">
        <span class="s0">For Help, press F1</span><span class="s1">Default</span><span class="s2"></span><span class="s3"></span><span class="s3"></span><span class="s4"></span><span class="s4"></span><span class="s4"></span><span class="s5">${I.net}114.98 ms</span>
      </footer>`;
  }
}
